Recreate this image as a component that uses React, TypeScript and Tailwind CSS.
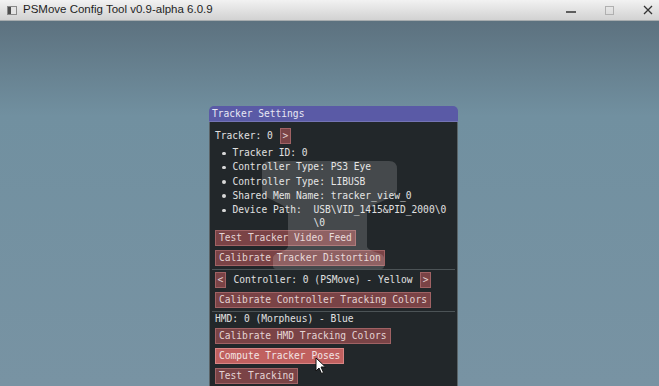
import React from "react";

const mono = { fontFamily: '"DejaVu Sans Mono", "Liberation Mono", monospace' };

function Btn({ label, hot }: { label: string; hot?: boolean }) {
  return (
    <div
      className={
        "h-[16px] leading-[14px] px-[3px] border whitespace-pre " +
        (hot
          ? "bg-[#c0605f] border-[#d88584] text-[#f3e4e4]"
          : "bg-[#7a4346] border-[#a06264] text-[#e4d4d4]")
      }
    >
      {label}
    </div>
  );
}

function Arrow({ ch }: { ch: string }) {
  return (
    <div className="h-[16px] w-[11px] leading-[14px] text-center border bg-[#7a4346] border-[#a06264] text-[#e4d4d4]">
      {ch}
    </div>
  );
}

function Bullet({ children }: { children: React.ReactNode }) {
  return (
    <div className="flex items-start pl-[7px] leading-[14.25px]">
      <span className="mt-[5.5px] w-[3.5px] h-[3.5px] rounded-full bg-[#d8d8d8] shrink-0" />
      <div className="ml-[7px]">{children}</div>
    </div>
  );
}

function Sep() {
  return <div className="h-px bg-[#4c5356] mx-[2px]" />;
}

export default function App() {
  return (
    <div className="w-[659px] h-[386px] overflow-hidden flex flex-col bg-gradient-to-b from-[#586b78] via-[#7190a0] via-30% to-[#7893a3]">
      {/* OS title bar */}
      <div
        className="h-[21px] shrink-0 flex items-center bg-gradient-to-b from-[#f2f2f2] to-[#d2d2d2] border-b border-[#a7acae]"
        style={{ fontFamily: '"Liberation Sans", Arial, sans-serif' }}
      >
        <div className="ml-[7px] w-[10px] h-[9px] border border-[#8a8a8a] bg-[#e4e4e4] flex">
          <div className="w-[3px] bg-[#4d4d4d]" />
        </div>
        <span className="ml-[6px] text-[11.5px] text-[#1e1e1e]">PSMove Config Tool v0.9-alpha 6.0.9</span>
        <div className="ml-auto flex items-center">
          <svg width="10" height="10" viewBox="0 0 10 10" className="mr-[29px] mt-[2px]">
            <line x1="0" y1="6" x2="10" y2="6" stroke="#3c3c3c" strokeWidth="1.6" />
          </svg>
          <svg width="9" height="9" viewBox="0 0 9 9" className="mr-[29px]">
            <rect x="0.5" y="0.5" width="8" height="8" fill="none" stroke="#b0b0b0" />
          </svg>
          <svg width="10" height="10" viewBox="0 0 10 10" className="mr-[6px]">
            <path d="M1 1 L9 9 M9 1 L1 9" stroke="#333" strokeWidth="1.3" />
          </svg>
        </div>
      </div>

      {/* desktop */}
      <div className="flex-1 pl-[209px] pt-[85px]">
        <div className="relative w-[249px] text-[9.6px] text-[#e0e0e0]" style={mono}>
          <div className="h-[16px] leading-[16px] px-[3px] rounded-t-[5px] bg-[#5a5aa6] border-b border-[#7474b4] text-[#e8e8f4]">
            Tracker Settings
          </div>
          <div className="bg-[#22272a] border-x border-[#5a6468] h-[400px]">
            <div className="px-[5px] pt-[6px]">
              <div className="flex items-center gap-[7px]">
                <span>Tracker: 0</span>
                <Arrow ch=">" />
              </div>
              <div className="mt-[2px]">
                <Bullet>Tracker ID: 0</Bullet>
                <Bullet>Controller Type: PS3 Eye</Bullet>
                <Bullet>Controller Type: LIBUSB</Bullet>
                <Bullet>Shared Mem Name: tracker_view_0</Bullet>
                <Bullet>
                  <div className="flex whitespace-pre">
                    <span>Device Path:  </span>
                    <div>
                      <div>USB\VID_1415&amp;PID_2000\0</div>
                      <div className="leading-[11px]">\0</div>
                    </div>
                  </div>
                </Bullet>
              </div>
              <div className="mt-[1.5px] flex flex-col items-start gap-[4px]">
                <Btn label="Test Tracker Video Feed" />
                <Btn label="Calibrate Tracker Distortion" />
              </div>
            </div>
            <div className="mt-[3px] mb-[2px]">
              <Sep />
            </div>
            <div className="px-[5px] flex flex-col items-start gap-[4px]">
              <div className="flex items-center gap-[7.5px]">
                <Arrow ch="<" />
                <span>Controller: 0 (PSMove) - Yellow</span>
                <Arrow ch=">" />
              </div>
              <Btn label="Calibrate Controller Tracking Colors" />
            </div>
            <div className="mt-[3px]">
              <Sep />
            </div>
            <div className="px-[5px] flex flex-col items-start">
              <div className="leading-[14px]">HMD: 0 (Morpheus) - Blue</div>
              <div className="mt-[2px] flex flex-col items-start gap-[4px]">
                <Btn label="Calibrate HMD Tracking Colors" />
                <Btn label="Compute Tracker Poses" hot />
                <Btn label="Test Tracking" />
              </div>
            </div>
            <div className="mt-[2px]">
              <Sep />
            </div>
          </div>

          {/* faint watermark */}
          <svg
            className="absolute left-0 top-0 pointer-events-none"
            width="249"
            height="180"
            viewBox="0 0 249 180"
          >
            <path
              d="M61 55 L180 55 Q188 55 188 63 L188 84 C188 94 160 96 158 106 L158 140 C158 146 175 146 175 152 L175 160 Q175 163 172 163 L67 163 Q64 163 64 160 L64 152 C64 146 79 146 79 140 L79 106 C77 96 53 94 53 84 L53 63 Q53 55 61 55 Z"
              fill="#ffffff"
              fillOpacity="0.16"
            />
          </svg>

          {/* mouse cursor */}
          <svg
            className="absolute left-[106px] top-[251px] pointer-events-none"
            width="12"
            height="18"
            viewBox="0 0 12 18"
          >
            <path
              d="M1 1 L1 14 L4 11 L6.5 16.5 L8.5 15.5 L6 10 L10.5 10 Z"
              fill="#ffffff"
              stroke="#111"
              strokeWidth="1"
              strokeLinejoin="round"
            />
          </svg>
        </div>
      </div>
    </div>
  );
}
